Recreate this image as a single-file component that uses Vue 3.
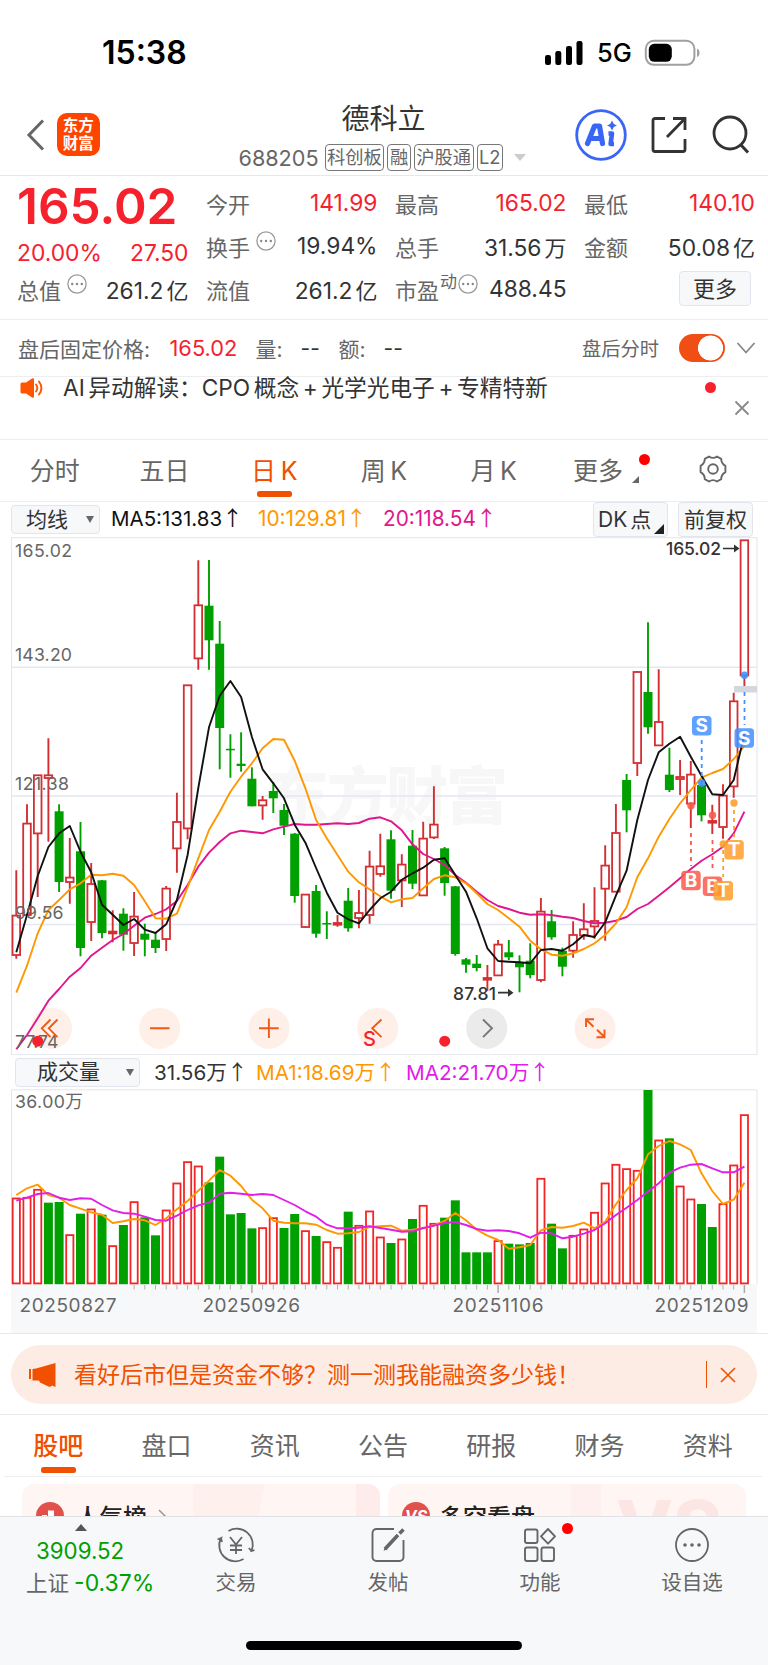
<template>
  <div class="page">
    <header class="status">
      <span class="time">15:38</span>
      <svg class="signal" width="40" height="26" viewBox="0 0 40 26">
        <rect x="1" y="15" width="6" height="10" rx="2.2" />
        <rect x="11.3" y="11" width="6" height="14" rx="2.2" />
        <rect x="22" y="6" width="6" height="19" rx="2.2" />
        <rect x="32.5" y="1" width="6" height="24" rx="2.2" />
      </svg>
      <span class="net">5G</span>
      <svg class="battery" width="57" height="28" viewBox="0 0 57 28">
        <rect x="1.8" y="1.8" width="48.6" height="24" rx="8" fill="none" stroke="#a0a0a0" stroke-width="2" />
        <rect x="4.8" y="4.8" width="23" height="18" rx="5.5" />
        <path d="M53 9.5c3.4 1.2 3.4 7.4 0 8.6z" fill="#a0a0a0" />
      </svg>
    </header>

    <nav class="nav">
      <svg class="back" width="20" height="34" viewBox="0 0 20 34">
        <path d="M17 2.5L3 17l14 14.5" fill="none" stroke="#666" stroke-width="3" />
      </svg>
      <div class="logo"><span>东方</span><span>财富</span></div>
      <div class="title">
        <div class="name">德科立</div>
        <div class="code">
          <span class="num">688205</span>
          <span v-for="t in tags" :key="t" class="tag">{{ t }}</span>
          <i class="caret"></i>
        </div>
      </div>
      <svg class="ai" width="52" height="52" viewBox="0 0 52 52">
        <circle cx="26" cy="26" r="24.3" fill="none" stroke="#3a66f5" stroke-width="2.8" />
        <path d="M12.5 34.5L19.5 17h5l3 17.5M16.5 29.500h9" fill="none" stroke="#3a66f5" stroke-width="5.2" stroke-linejoin="round" stroke-linecap="round" />
        <path d="M33.500 24.5h3.500l-1.4 10.500h3.4" fill="none" stroke="#3a66f5" stroke-width="4.6" stroke-linejoin="round" />
        <path d="M37 11.5l1.800 3.400 3.200 1.600-3.200 1.600-1.800 3.400-1.800-3.400-3.200-1.600 3.200-1.600z" fill="#3a66f5" />
      </svg>
      <svg class="share" width="40" height="40" viewBox="0 0 40 40">
        <path d="M16 3.5H6a2 2 0 0 0-2 2v29a2 2 0 0 0 2 2h28a2 2 0 0 0 2-2V24M24 3.5h12V15M36 3.5L18 22" fill="none" stroke="#333" stroke-width="2.8" />
      </svg>
      <svg class="search" width="40" height="40" viewBox="0 0 40 40">
        <circle cx="19" cy="18" r="16" fill="none" stroke="#333" stroke-width="2.8" />
        <path d="M29.5 29.5l7.5 8" stroke="#333" stroke-width="3" />
      </svg>
    </nav>

    <section class="quote">
      <div class="col first">
        <div class="price">165.02</div>
        <div class="cell"><b class="up">20.00%</b><b class="up">27.50</b></div>
        <div class="cell"><span>总值<Dots /></span><b>261.2<u>亿</u></b></div>
      </div>
      <div class="col">
        <div class="cell"><span>今开</span><b class="up">141.99</b></div>
        <div class="cell"><span>换手<Dots /></span><b>19.94%</b></div>
        <div class="cell"><span>流值</span><b>261.2<u>亿</u></b></div>
      </div>
      <div class="col">
        <div class="cell"><span>最高</span><b class="up">165.02</b></div>
        <div class="cell"><span>总手</span><b>31.56<u>万</u></b></div>
        <div class="cell"><span>市盈<sup>动</sup><Dots class="near" /></span><b>488.45</b></div>
      </div>
      <div class="col">
        <div class="cell"><span>最低</span><b class="up">140.10</b></div>
        <div class="cell"><span>金额</span><b>50.08<u>亿</u></b></div>
        <div class="cell end"><button class="more">更多</button></div>
      </div>
    </section>

    <section class="after">
      <span class="lbl">盘后固定价格:</span><b class="up">165.02</b>
      <span class="lbl vol">量:</span><b class="dash">--</b>
      <span class="lbl amt">额:</span><b class="dash">--</b>
      <span class="mode">盘后分时</span>
      <i class="toggle"></i>
      <svg class="down" width="20" height="14" viewBox="0 0 20 14"><path d="M1.5 2L10 11.5 18.5 2" fill="none" stroke="#888" stroke-width="1.8" /></svg>
    </section>

    <section class="notice">
      <svg class="horn" width="26" height="22" viewBox="0 0 26 22">
        <path d="M1.5 7q0-1.5 1.5-1.5h4L13 1.6q2-1 2 1v16.8q0 2-2 1L7 16.5H3Q1.5 16.5 1.5 15z" fill="#ff5500" />
        <path d="M17 7.5q2.6 3.5 0 7M20 4.5q4.8 6.5 0 13" fill="none" stroke="#ff5500" stroke-width="1.9" stroke-linecap="round" />
      </svg>
      <span class="msg">AI<i></i>异动解读：CPO<i></i>概念<i></i>+<i></i>光学光电子<i></i>+<i></i>专精特新</span>
      <i class="dot"></i>
      <svg class="close" width="16" height="16" viewBox="0 0 16 16"><path d="M1.5 1.5l13 13M14.5 1.5l-13 13" stroke="#888" stroke-width="1.8" /></svg>
    </section>

    <section class="periods">
      <div v-for="(p, i) in periods" :key="p" class="tab" :class="{ on: i === 2 }">{{ p }}</div>
      <div class="tab more-tab">更多<i class="corner"></i><i class="dot"></i></div>
      <div class="tab">
        <svg width="30" height="30" viewBox="0 0 30 30" fill="none" stroke="#666" stroke-width="1.9">
          <path d="M11 2.5Q15 5.3 19 2.5L23.2 4.8Q23.2 9.6 27.4 11.9V18.1Q23.2 20.4 23.2 25.2L19 27.5Q15 24.7 11 27.5L6.8 25.2Q6.8 20.4 2.6 18.1V11.9Q6.8 9.6 6.8 4.8Z" stroke-linejoin="round" />
          <circle cx="15" cy="15" r="4.8" />
        </svg>
      </div>
    </section>

    <section class="ma-row">
      <button class="pick">均线<i></i></button>
      <span class="ma5">MA5:131.83<em>↑</em></span>
      <span class="ma10">10:129.81<em>↑</em></span>
      <span class="ma20">20:118.54<em>↑</em></span>
      <button class="dk">DK<s></s>点<i></i></button>
      <button class="fq">前复权</button>
    </section>

    <svg class="chart" width="768" height="518" viewBox="0 537 768 518">
      <text class="mark" x="267" y="819" textLength="241">东方财富</text>
      <rect x="11.5" y="537.7" width="745.5" height="517" fill="none" stroke="#e3e5ec" />
      <path d="M11 667.2H757M11 796H757M11 924.5H757" stroke="#e4e8f2" stroke-width="1.4" />
      <circle v-for="(b, i) in buttons" :key="b" :cx="b" cy="1028.3" r="20.6" :fill="i === 4 ? '#ebebeb' : '#fef0e9'" />
      <g v-for="(c, i) in candles" :key="i" :stroke="c[0] ? '#d22f32' : '#00a000'">
        <path v-if="c[0]" :d="`M${x(i)} ${c[3]}V${c[1]}M${x(i)} ${c[2]}V${c[4]}`" stroke-width="1.9" />
        <path v-else :d="`M${x(i)} ${c[3]}V${c[4]}`" stroke-width="1.9" />
        <rect v-if="c[0]" :x="x(i) - 3.8" :y="c[1] + 0.3" width="7.6" :height="Math.max(c[2] - c[1] - 0.6, 1)" fill="none" stroke-width="1.8" />
        <rect v-else :x="x(i) - 4.5" :y="c[1]" width="9" :height="c[2] - c[1]" fill="#00a000" stroke="none" />
      </g>
      <polyline class="line" :points="line(ma20)" stroke="#e0168c" />
      <polyline class="line" :points="line(ma10)" stroke="#ff9800" />
      <polyline class="line" :points="line(ma5)" stroke="#111" />
      <g class="axis">
        <text x="15" y="557" textLength="57">165.02</text>
        <text x="15" y="661" textLength="57">143.20</text>
        <text x="15" y="790" textLength="54">121.38</text>
        <text x="15" y="919" textLength="48.5">99.56</text>
        <text x="15" y="1048" textLength="43.5">77.74</text>
      </g>
      <g class="peak">
        <text x="666" y="555" textLength="55">165.02</text>
        <text x="453" y="999.5" textLength="43">87.81</text>
        <path d="M723 548.5h12M498 992.7h11" stroke="#333" stroke-width="1.7" />
        <path d="M734 544.5l5.5 4-5.5 4zM508 988.7l5.5 4-5.5 4z" fill="#333" />
      </g>

      <rect x="734" y="686" width="23" height="6.5" fill="#d4d7de" />
      <g v-for="m in marks" :key="m.x + m.t">
        <path :d="`M${m.dx} ${m.from}V${m.to}`" :stroke="m.c" stroke-width="1.8" stroke-dasharray="4 4" />
        <circle :cx="m.dx" :cy="m.dot" r="3.7" :fill="m.c" fill-opacity="0.9" />
        <rect :x="m.x" :y="m.y" width="19.5" height="19.5" rx="3.5" :fill="m.c" fill-opacity="0.85" />
        <text class="badge" :x="m.x + 9.75" :y="m.y + 16.4">{{ m.t }}</text>
      </g>

      <g fill="none" stroke="#f05a14" stroke-width="1.9">
        <path d="M50.5 1019.5l-8.7 8.8 8.7 8.8M57.5 1019.5l-8.7 8.8 8.7 8.8" />
        <path d="M150 1028.3h19.5M259 1028.3h19.7M268.9 1018.5v19.5" />
        <path d="M381.5 1019.5l-9.3 8.8 9.3 8.8" />
        <path d="M586 1027v-7.7h8M586.5 1020l7 6.8M604.5 1029.5v7.7h-8M604 1036.5l-7-6.8" />
      </g>
      <path d="M483 1019.5l9 8.8-9 8.8" fill="none" stroke="#777" stroke-width="1.9" />
      <circle cx="37.7" cy="1041.2" r="5.5" fill="#f5222d" />
      <circle cx="444.7" cy="1041.2" r="5.5" fill="#f5222d" />
      <text class="red-s" x="363" y="1046.3">S</text>
    </svg>

    <section class="vol-row">
      <button class="pick">成交量<i></i></button>
      <span class="v0">31.56万<em>↑</em></span>
      <span class="v1">MA1:18.69万<em>↑</em></span>
      <span class="v2">MA2:21.70万<em>↑</em></span>
    </section>

    <svg class="volume" width="768" height="244" viewBox="0 1089 768 244">
      <rect x="11" y="1284" width="746" height="49" fill="#f7f8fa" />
      <path d="M11.5 1284V1089.8H757V1284" fill="none" stroke="#e3e5ec" />
      <text class="axis" x="15" y="1108" textLength="68">36.00万</text>
      <g v-for="(v, i) in volumes" :key="i">
        <rect v-if="v > 0" :x="x(i) - 3.6" :y="vy(v) + 0.8" width="7.2" :height="1282.6 - vy(v)" fill="#fff" stroke="#f52525" stroke-width="1.8" />
        <rect v-else :x="x(i) - 4.5" :y="vy(-v)" width="9" :height="1284.2 - vy(-v)" fill="#00a000" />
        <path v-if="i > 10" :d="`M${x(i)} 1285v${(i + 1) % 23 ? 4.5 : 8}`" stroke="#aaa" :stroke-width="(i + 1) % 23 ? 0.9 : 1.5" />
      </g>
      <polyline class="line" :points="line(vma1.map(vy))" stroke="#ff9800" />
      <polyline class="line" :points="line(vma2.map(vy))" stroke="#e020e8" />
      <g class="axis date">
        <text x="19.5" y="1312.3" textLength="97">20250827</text>
        <text x="202.5" y="1312.3" textLength="97.5">20250926</text>
        <text x="452.5" y="1312.3" textLength="91">20251106</text>
        <text x="654.5" y="1312.3" textLength="94">20251209</text>
      </g>
    </svg>

    <section class="promo">
      <div class="pill">
        <svg class="mega" width="30" height="26" viewBox="0 0 30 26" fill="#f05000">
          <rect x="1" y="7" width="2" height="10" /><path d="M4.500 7L8 6.500 27.500 1v24L24 23.500q-1 1.500-3 1.200L12 20.500l-1-2H4.500z" />
        </svg>
        <span>看好后市但是资金不够？测一测我能融资多少钱！</span>
        <i class="bar"></i>
        <svg width="16" height="16" viewBox="0 0 16 16"><path d="M1 1l14 14M15 1L1 15" stroke="#f05000" stroke-width="1.6" /></svg>
      </div>
    </section>

    <section class="subtabs">
      <div v-for="(s, i) in subtabs" :key="s" class="tab" :class="{ on: i === 0 }">{{ s }}</div>
    </section>

    <section class="cards">
      <div class="card">
        <svg width="28" height="28" viewBox="0 0 28 28"><circle cx="14" cy="14" r="14" fill="#e2504b" /><path d="M6 13h5v8H6zM12 8.500h6v13h-6z" fill="#fff" /></svg>
        <span>人气榜</span>
        <svg class="go" width="9" height="16" viewBox="0 0 9 16"><path d="M1 1l7 7-7 7" fill="none" stroke="#999" stroke-width="1.5" /></svg>
        <svg class="art" width="190" height="40" viewBox="0 0 190 40" fill="#fdeae7"><path d="M3 0h72l-8 40H3z" opacity=".5" /><path d="M92 32h56v8H92zM166 0h24v40h-24z" opacity=".8" /></svg>
      </div>
      <div class="card">
        <svg width="28" height="28" viewBox="0 0 28 28"><circle cx="14" cy="14" r="14" fill="#e2504b" /><text x="14" y="20" class="vs">VS</text></svg>
        <span>多空看盘</span>
        <svg class="art" width="190" height="40" viewBox="0 0 190 40"><path d="M15 0h30v40H15z" fill="#fdf0ee" /><text x="60" y="70" class="big-vs">VS</text></svg>
      </div>
    </section>

    <footer class="dock">
      <div class="index">
        <i class="tri"></i>
        <div class="pt">3909.52</div>
        <div class="sh">上证 <b>-0.37%</b></div>
      </div>
      <div class="item">
        <svg width="40" height="38" viewBox="0 0 40 38" fill="none" stroke="#666" stroke-width="1.8">
          <path d="M12.500 5A16 16 0 0 1 35.500 25l3-.8M35.500 25l-2.700-3M27.500 33A16 16 0 0 1 5 12l-3.500 1.500M5 12l1 4" />
          <path d="M14 11l6 7.500 6-7.500M14 19.500h12M14 24h12M20 18.500V28" />
        </svg>
        <span>交易</span>
      </div>
      <div class="item">
        <svg width="40" height="38" viewBox="0 0 40 38" fill="none" stroke="#666" stroke-width="1.9">
          <path d="M26 3H8.500a4 4 0 0 0-4 4v24a4 4 0 0 0 4 4h23a4 4 0 0 0 4-4V14" />
          <path d="M17 23l13-14M31.500 7.500l4-4" stroke-width="3.600" /><path d="M15.500 25l4-2-2.500-2z" fill="#666" stroke="none" />
        </svg>
        <span>发帖</span>
      </div>
      <div class="item">
        <svg width="40" height="38" viewBox="0 0 40 38" fill="none" stroke="#666" stroke-width="1.9">
          <rect x="5" y="3.5" width="12.5" height="13.5" rx="2" /><rect x="5" y="21.5" width="12.5" height="13.5" rx="2" />
          <rect x="21.5" y="21.5" width="12.5" height="13.5" rx="2" /><path d="M28 3l7 7.3-7 7.3-7-7.300z" stroke-linejoin="round" />
        </svg>
        <span>功能</span>
        <i class="dot"></i>
      </div>
      <div class="item">
        <svg width="40" height="38" viewBox="0 0 40 38">
          <circle cx="20" cy="19" r="16" fill="none" stroke="#666" stroke-width="1.8" />
          <g fill="#666"><circle cx="13" cy="19" r="1.8" /><circle cx="20" cy="19" r="1.8" /><circle cx="27" cy="19" r="1.8" /></g>
        </svg>
        <span>设自选</span>
      </div>
      <i class="home"></i>
    </footer>
  </div>
</template>

<script setup>
import { h } from 'vue';

const tags = ['科创板', '融', '沪股通', 'L2'];
const periods = ['分时', '五日', '日 K', '周 K', '月 K'];
const subtabs = ['股吧', '盘口', '资讯', '公告', '研报', '财务', '资料'];
const buttons = [51.5, 159.7, 269, 377.7, 486.7, 595];

// round "..." hint behind a label
const Dots = () => h('svg', { width: 20, height: 20, viewBox: '0 0 20 20' }, [
  h('circle', { cx: 10, cy: 10, r: 9.1, fill: 'none', stroke: '#999', 'stroke-width': 1.3 }),
  ...[5.2, 10, 14.8].map((cx) => h('circle', { cx, cy: 10, r: 1.2, fill: '#888' })),
]);

const x = (i) => +(16.3 + i * 10.707).toFixed(1);
const vy = (v) => 1085 + v / 3;
const line = (arr) => arr.map((y, i) => `${x(i)},${y.toFixed(1)}`).join(' ');

// [up, body top, body bottom, high, low]
const candles = [
  [1, 915.3, 955.3, 870.3, 958.7], [1, 823.3, 915.3, 804.3, 916], [1, 775, 833.7, 775, 897], [1, 775, 778.3, 738.3, 841.7],
  [0, 811.3, 882, 804.3, 892], [1, 877.3, 882.3, 838, 903.7], [0, 851.3, 948, 822, 956.3], [1, 883.7, 922.3, 863, 941],
  [0, 880.3, 933, 880, 938.3], [1, 931.3, 933.7, 910.3, 942.3], [0, 913.7, 934.7, 908.3, 950.7], [1, 916.3, 943.3, 892, 956],
  [0, 933.7, 939.7, 923.7, 956.3], [0, 939.7, 948, 933, 953], [1, 888.3, 939.3, 886, 951], [1, 821.7, 848.7, 792.7, 872.7],
  [1, 685, 828.7, 685, 839.3], [1, 605, 658.7, 560.3, 669.7], [0, 605.7, 640.3, 560, 669.7], [0, 643.7, 728, 621, 769.3],
  [0, 748.8, 750.3, 734.3, 777.7], [0, 763.7, 766, 732.3, 771.7], [0, 778.7, 806.3, 767.3, 806.3], [1, 800, 805.7, 796, 819.7],
  [0, 791, 798.3, 782, 813], [0, 810, 825.7, 804, 835], [0, 833.7, 896, 833, 902.7], [1, 894.3, 927.3, 894, 928],
  [0, 891, 933.7, 885, 937.7], [0, 923, 924.5, 911.3, 939], [1, 922.7, 925, 915, 926.7], [0, 900.7, 928.3, 888, 931.7],
  [1, 912.7, 918.3, 890, 928.3], [1, 866.3, 915.3, 850.7, 923.7], [1, 866, 874.3, 833.7, 876.7], [0, 839.3, 890.7, 830.3, 898.7],
  [1, 864.3, 880.7, 854.3, 907], [0, 845.7, 883.7, 830, 889], [1, 838.3, 895.7, 821.7, 896], [1, 824.3, 837.7, 786.3, 839],
  [0, 848.3, 883, 847, 895.7], [0, 886.3, 954, 886, 955.7], [0, 959.3, 964.7, 958, 972.7], [0, 963.7, 968, 955, 971.3],
  [1, 977.7, 980, 965, 990.7], [1, 944.3, 975.7, 940, 976], [0, 952.3, 957.3, 940, 960], [0, 962.3, 967.3, 955.3, 992.3],
  [0, 960.7, 975, 943.3, 978.3], [1, 911.3, 980.3, 898, 982.3], [0, 921.3, 937.3, 910, 939.7], [0, 950.7, 966.7, 947.7, 976.3],
  [1, 934.7, 951, 921.3, 957.7], [1, 929, 935.7, 903.3, 939.7], [1, 920.7, 926.7, 887.3, 938.7], [1, 865.3, 889, 845.3, 940.7],
  [1, 832.7, 892, 804, 892], [0, 780, 810.3, 774, 832.3], [1, 671.7, 763.3, 671, 776], [0, 692, 727.3, 622.3, 733.7],
  [1, 721.7, 745.7, 669.3, 746], [0, 774.7, 790, 747.7, 792], [1, 776.7, 779.3, 760, 795], [1, 774.3, 804, 761, 828],
  [0, 785, 815.3, 780, 821.3], [1, 820.7, 823, 804.7, 834], [1, 795.3, 827.3, 784.3, 838.7], [1, 701, 786.7, 692.7, 797.7],
  [1, 540, 675.7, 540, 686.3],
];

const ma5 = [
  952.3, 915, 876, 847, 833.3, 826, 851.7, 872.3, 904.7, 914.7, 925, 919, 929.7, 933, 924.3, 900, 855, 788, 727.3, 695.7,
  681, 697, 737, 769.3, 783.3, 798.3, 824.7, 842.7, 868, 892.7, 912.7, 919.3, 923.3, 910, 898.3, 891.7, 879.7, 873.3, 867.7, 859.7,
  858.3, 875, 891.7, 918.3, 948.3, 961, 961.7, 962.3, 963.3, 950, 949, 950.7, 944.3, 935, 937, 922.3, 895.7, 870.7, 820, 780,
  752.3, 743.7, 736.7, 756.7, 775.7, 794.3, 795, 780, 734.3,
];
const ma10 = [
  992.7, 965.7, 933.3, 910, 900, 889.3, 883.3, 874.7, 875.3, 873.7, 875.7, 885, 901.3, 918.3, 918.7, 913.7, 887.3, 858.3, 830, 811.7,
  791.7, 776.7, 763.3, 748.3, 739, 739.7, 760.7, 788.3, 820, 838.3, 855, 871.7, 882.3, 889.3, 896.3, 902.3, 899.3, 898, 888.3, 879,
  875.3, 877.3, 883.3, 893.3, 904, 910, 918.3, 926.7, 940.7, 949.3, 954.7, 955.7, 953.3, 949, 943.3, 935, 923.3, 907.3, 877.3, 858.3,
  836.7, 819, 803.3, 790, 777.7, 773, 769, 759, 746,
];
const ma20 = [
  1049.3, 1035, 1018.3, 1000.7, 989, 976.7, 968, 955.7, 947.7, 940, 934, 925.7, 917.7, 914, 909.3, 901, 885, 866.7, 852.7, 842,
  833.3, 830.7, 832, 833.3, 829.3, 826.7, 824, 824.7, 824.7, 824, 823.3, 824, 823, 818.7, 817.3, 821.3, 830.3, 844.3, 854, 859,
  865, 875, 882.7, 891.7, 900, 906, 909, 912.7, 914.7, 914.3, 915, 916.7, 918, 921, 923.3, 922.7, 920.7, 917, 909, 904,
  895.7, 887.3, 878.3, 869, 860.7, 854.3, 846.7, 833.3, 811.7,
];

// bar tops, negative = down day
const volumes = [
  338, 336, 312, -353, -351, 448, -386, 371, -389, 481, -420, 349, -397, -451, 374, 293, 229, 242, -292, -215,
  -388, -384, -430, 427, 397, -429, -387, 436, -453, 469, 486, -380, 420, 377, 455, -474, 461, -402, 360, 414,
  -398, -346, -502, -502, -502, 466, -476, -478, -474, 279, -416, -490, 450, 431, 381, 293, 237, 250, 255, -15,
  164, -160, 302, 341, -357, -426, 355, 239, 88,
];
const vma1 = [
  330, 310, 299, 330, 338, 360, 371, 382, 389, 414, 409, 402, 406, 420, 400, 373, 348, 317, 287, 255,
  272, 303, 344, 370, 407, 413, 415, 415, 419, 435, 446, 445, 441, 426, 424, 422, 437, 434, 430, 421,
  408, 384, 406, 434, 452, 465, 491, 487, 480, 436, 426, 428, 423, 413, 430, 410, 358, 315, 280, 208,
  183, 168, 178, 195, 265, 318, 357, 344, 293,
];
const vma2 = [
  347, 338, 327, 324, 338, 345, 340, 341, 360, 376, 384, 386, 395, 405, 407, 392, 375, 361, 353, 326,
  323, 326, 330, 327, 330, 345, 360, 379, 395, 419, 430, 430, 428, 424, 429, 434, 440, 439, 429, 422,
  414, 411, 420, 432, 437, 436, 438, 445, 458, 443, 445, 460, 455, 446, 435, 415, 390, 368, 345, 320,
  295, 263, 248, 239, 237, 250, 262, 262, 245,
];

const marks = [
  { t: 'S', x: 692, y: 716, dx: 701.7, from: 740, to: 778, dot: 783, c: '#4391ff' },
  { t: 'S', x: 734.5, y: 728.3, dx: 744.5, from: 692, to: 725, dot: 675.3, c: '#4391ff' },
  { t: 'B', x: 681.2, y: 870.7, dx: 691, from: 833, to: 866, dot: 805.7, c: '#fa5b4b' },
  { t: 'B', x: 702.8, y: 876.5, dx: 712.5, from: 840, to: 872, dot: 815.3, c: '#fa5b4b' },
  { t: 'T', x: 713.5, y: 881, dx: 723.2, from: 850, to: 877, dot: 844, c: '#ff9d2b' },
  { t: 'T', x: 724.3, y: 840, dx: 734, from: 810, to: 837, dot: 803, c: '#ff9d2b' },
];
</script>

<style>
body {
  background: #fff;
}
</style>

<style scoped>
.page {
  width: 768px;
  height: 1665px;
  overflow: hidden;
  display: flex;
  flex-direction: column;
  background: #fff;
  color: #333;
  font-family: Inter, "Noto Sans CJK SC", sans-serif;
  white-space: nowrap;
}
.page > * {
  box-sizing: border-box;
  flex: none;
}
svg {
  display: block;
  flex: none;
}
i, em, u, s {
  font-style: normal;
  text-decoration: none;
}
b {
  font-weight: 400;
}
button {
  box-sizing: border-box;
  padding: 0;
  border: 1.5px solid #e2e5ee;
  border-radius: 4px;
  background: #f7f8fa;
  color: #333;
  font-family: inherit;
}
.up {
  color: #f5222d !important;
}
.dot {
  width: 11px;
  height: 11px;
  border-radius: 50%;
  background: #f5222d;
}

.status {
  height: 90px;
  padding: 15px 0 0 102px;
  display: flex;
  align-items: center;
  color: #000;
}
.time {
  width: 442px;
  font-size: 32px;
  font-weight: 600;
}
.net {
  margin-left: 13px;
  width: 47px;
  font-size: 25.5px;
  font-weight: 500;
}

.nav {
  height: 86px;
  border-bottom: 1.5px solid #e8e8e8;
  padding: 4px 17px 0 26px;
  display: flex;
  align-items: center;
}
.logo {
  width: 42.5px;
  height: 42.5px;
  margin-left: 11px;
  border-radius: 10px;
  background: #ff4400;
  color: #fff;
  display: flex;
  flex-direction: column;
  align-items: center;
  justify-content: center;
  font-size: 15.5px;
  font-weight: 700;
  line-height: 17.5px;
}
.title {
  flex: 1;
  padding-left: 139px;
  height: 81px;
}
.name {
  margin: 7px 0 0 103px;
  font-size: 28px;
  line-height: 36px;
}
.code {
  margin-top: 7px;
  display: flex;
  align-items: center;
  color: #666;
}
.num {
  font-size: 21.6px;
  letter-spacing: 0;
  margin-right: 6px;
}
.tag {
  box-sizing: border-box;
  height: 27px;
  padding: 0 1.5px;
  margin-right: 3px;
  border: 1.5px solid #777;
  border-radius: 4px;
  font-size: 18.3px;
  line-height: 24px;
}
.caret {
  margin-left: 8px;
  border: 6px solid transparent;
  border-top: 7px solid #ccc;
  border-bottom: 0;
}
.ai {
  margin-right: 22px;
}
.share {
  margin-right: 22px;
}

.quote {
  height: 144px;
  border-bottom: 1.5px solid #eee;
  padding: 7px 12px 0 17px;
  display: grid;
  grid-template-columns: 171.5px 171.5px 171.5px 171px;
  column-gap: 17.5px;
}
.col {
  display: grid;
  grid-template-rows: 43px 43px 43px;
  margin-top: -2px;
}
.price {
  color: #f5222d;
  font-size: 49.5px;
  font-weight: 600;
  line-height: 51px;
}
.cell {
  display: flex;
  align-items: center;
  justify-content: space-between;
  font-size: 22px;
}
.cell b {
  font-size: 22.8px;
}
.cell b u {
  font-size: 22px;
}
.first .cell:nth-child(2) {
  padding-top: 14px;
}
.cell span {
  display: flex;
  align-items: center;
  color: #666;
}
.cell span svg {
  margin: -9px 0 0 6px;
}
.cell span svg.near {
  margin-left: 1px;
}
sup {
  font-size: 17px;
  line-height: 20px;
  margin: -14px 0 0 1px;
}
u {
  margin-left: 3px;
}
.cell.end {
  justify-content: flex-end;
  padding-right: 4px;
}
.more {
  width: 72px;
  height: 35px;
  font-size: 22px;
  line-height: 30px;
}

.after {
  height: 57px;
  border-bottom: 1px solid #eee;
  padding: 0 12px 0 18px;
  display: flex;
  align-items: center;
  font-size: 21px;
}
.lbl {
  color: #666;
}
.after .up {
  width: 86px;
  margin-left: 18.5px;
  font-size: 21.8px;
}
.lbl:first-child {
  width: 133px;
}
.vol, .amt {
  width: 45px;
}
.dash {
  width: 38px;
}
.mode {
  margin-left: auto;
  margin-right: 20px;
  color: #666;
  font-size: 19.3px;
}
.toggle {
  width: 46px;
  height: 28px;
  border-radius: 14px;
  background: radial-gradient(circle at 31.5px 14px, #fff 12.2px, #f04e14 12.8px);
}
.down {
  margin-left: 11px;
}

.notice {
  height: 63px;
  border-bottom: 1px solid #eee;
  padding: 0 18px 0 19px;
  display: flex;
  align-items: flex-start;
}
.msg {
  margin-left: 18px;
  font-size: 22.7px;
  line-height: 22px;
}
.msg i {
  display: inline-block;
  width: 3.6px;
}
.notice .dot {
  margin: 5px 0 0 auto;
}
.close {
  margin: 23px 0 0 18px;
}

.periods {
  height: 62px;
  border-bottom: 1px solid #eee;
  display: grid;
  grid-template-columns: repeat(7, 1fr);
}
.tab {
  position: relative;
  display: flex;
  align-items: center;
  justify-content: center;
  padding-bottom: 4px;
  color: #666;
  font-size: 25px;
  word-spacing: -2.5px;
}
.tab.on {
  color: #f05000;
}
.tab.on::after {
  content: "";
  position: absolute;
  bottom: 4px;
  left: calc(50% - 17.5px);
  width: 35px;
  height: 6px;
  border-radius: 2.5px;
  background: #f05000;
}
.more-tab {
  padding-right: 11px;
}
.corner {
  position: absolute;
  right: 19px;
  bottom: 18px;
  border-left: 7px solid transparent;
  border-bottom: 7px solid #666;
}
.more-tab .dot {
  position: absolute;
  left: 90px;
  top: 14px;
  background: #ff0000;
}

.ma-row {
  height: 35px;
  padding-left: 11px;
  display: flex;
  align-items: center;
  font-size: 20.5px;
}
.pick {
  height: 29px;
  width: 89px;
  font-size: 21px;
  line-height: 24px;
  display: flex;
  align-items: center;
  justify-content: space-between;
  padding: 0 5px 0 14px;
}
.pick i {
  border: 4px solid transparent;
  border-top: 7px solid #666;
  border-bottom: 0;
}
em {
  display: inline-block;
  width: 15px;
  font-family: "Noto Sans CJK SC";
  line-height: 20px;
}
.ma-row span {
  margin-top: -3px;
}
.ma5 {
  width: 147px;
  margin-left: 11px;
  color: #111;
}
.ma10 {
  width: 125px;
  color: #ff9800;
}
.ma20 {
  width: 210px;
  color: #e0168c;
}
.ma10, .ma20 {
  font-size: 20.8px;
}
.dk, .fq {
  position: relative;
  width: 75px;
  height: 35px;
  font-size: 21px;
  line-height: 30px;
  text-align: left;
  padding-left: 4px;
}
.dk s {
  display: inline-block;
  width: 3px;
}
.dk i {
  position: absolute;
  right: 3px;
  bottom: 2px;
  border-left: 10px solid transparent;
  border-bottom: 10px solid #222;
}
.fq {
  margin-left: 10px;
  padding-left: 5px;
}

.line {
  fill: none;
  stroke-width: 1.9;
  stroke-linejoin: round;
}
.mark {
  font-size: 62px;
  font-weight: 900;
  fill: #f7f7f7;
}
.axis {
  font-size: 17.7px;
  fill: #666;
}
.date {
  font-size: 19px;
}
.peak {
  font-size: 17.5px;
  font-weight: 500;
  fill: #333;
}
.badge {
  font-size: 19px;
  font-weight: 700;
  fill: #fff;
  text-anchor: middle;
}
.red-s {
  font-size: 20px;
  font-weight: 500;
  fill: #f5222d;
}

.vol-row {
  height: 34px;
  padding-left: 15px;
  display: flex;
  align-items: center;
  font-size: 20.7px;
}
.vol-row span {
  margin-top: -2px;
}
.vol-row .pick {
  width: 125px;
  padding-left: 21px;
}
.vol-row .v0 {
  width: 102px;
  margin-left: 14px;
}
.v1 {
  width: 150px;
  color: #ff9800;
}
.v2 {
  color: #e020e8;
}

.promo {
  height: 82px;
  border-top: 1.5px solid #e8e8e8;
  border-bottom: 1.5px solid #e8e8e8;
  padding: 11px 11px 0;
}
.pill {
  height: 59px;
  box-sizing: border-box;
  border-radius: 30px;
  background: #fdece3;
  color: #f05000;
  display: flex;
  align-items: center;
  padding: 0 21px 0 17px;
  font-size: 23px;
}
.pill span {
  margin: -4px 0 0 16px;
}
.bar {
  width: 1.5px;
  height: 27px;
  margin: 0 13px 0 auto;
  background: #f05000;
}

.subtabs {
  height: 62px;
  margin: 0 6px 0 4px;
  border-bottom: 1.5px solid #eee;
  display: grid;
  grid-template-columns: repeat(7, 1fr);
}
.subtabs .on {
  font-weight: 500;
}
.subtabs .on::after {
  bottom: 3px;
}

.cards {
  height: 39px;
  padding: 7px 22px 0;
  overflow: hidden;
  display: grid;
  grid-template-columns: 1fr 1fr;
  column-gap: 8px;
}
.card {
  position: relative;
  height: 60px;
  border-radius: 12px;
  background: #fff6f3;
  display: flex;
  align-items: flex-start;
  padding: 18px 0 0 14px;
  box-sizing: border-box;
  overflow: hidden;
  color: #222;
  font-size: 23.5px;
  font-weight: 500;
  line-height: 31px;
}
.card span {
  margin-left: 12px;
  z-index: 1;
}
.card:nth-child(2) span {
  margin-left: 9px;
  font-size: 24px;
}
.go {
  margin: 7px 0 0 11px;
}
.art {
  position: absolute;
  right: 0;
  top: 0;
}
.vs {
  font-size: 16px;
  font-style: italic;
  font-weight: 700;
  fill: #fff;
  text-anchor: middle;
}
.big-vs {
  font-size: 74px;
  font-weight: 800;
  fill: #fce6e3;
}

.dock {
  height: 149px;
  border-top: 1.5px solid #e0e2e6;
  background: #f7f8fa;
  display: grid;
  grid-template-columns: 160px repeat(4, 152px);
  position: relative;
  color: #666;
}
.index {
  padding: 7px 0 0 26px;
  font-size: 21.5px;
}
.tri {
  display: block;
  width: 0;
  margin-left: 49px;
  border: 6px solid transparent;
  border-bottom: 7px solid #555;
  border-top: 0;
}
.pt {
  margin: 6px 0 0 10px;
  font-size: 22.3px;
  line-height: 28px;
  color: #00a000;
}
.sh {
  margin-top: 1px;
  line-height: 34px;
}
.sh b {
  margin-left: -1px;
  font-size: 23px;
  color: #00a000;
}
.item {
  position: relative;
  display: flex;
  flex-direction: column;
  align-items: center;
  padding-top: 9px;
  font-size: 20.5px;
}
.item span {
  margin-top: 4px;
  line-height: 30px;
}
.item .dot {
  position: absolute;
  left: 97.5px;
  top: 6px;
  background: #ff0000;
}
.home {
  position: absolute;
  left: 246px;
  bottom: 15px;
  width: 276px;
  height: 9px;
  border-radius: 5px;
  background: #000;
}
</style>
